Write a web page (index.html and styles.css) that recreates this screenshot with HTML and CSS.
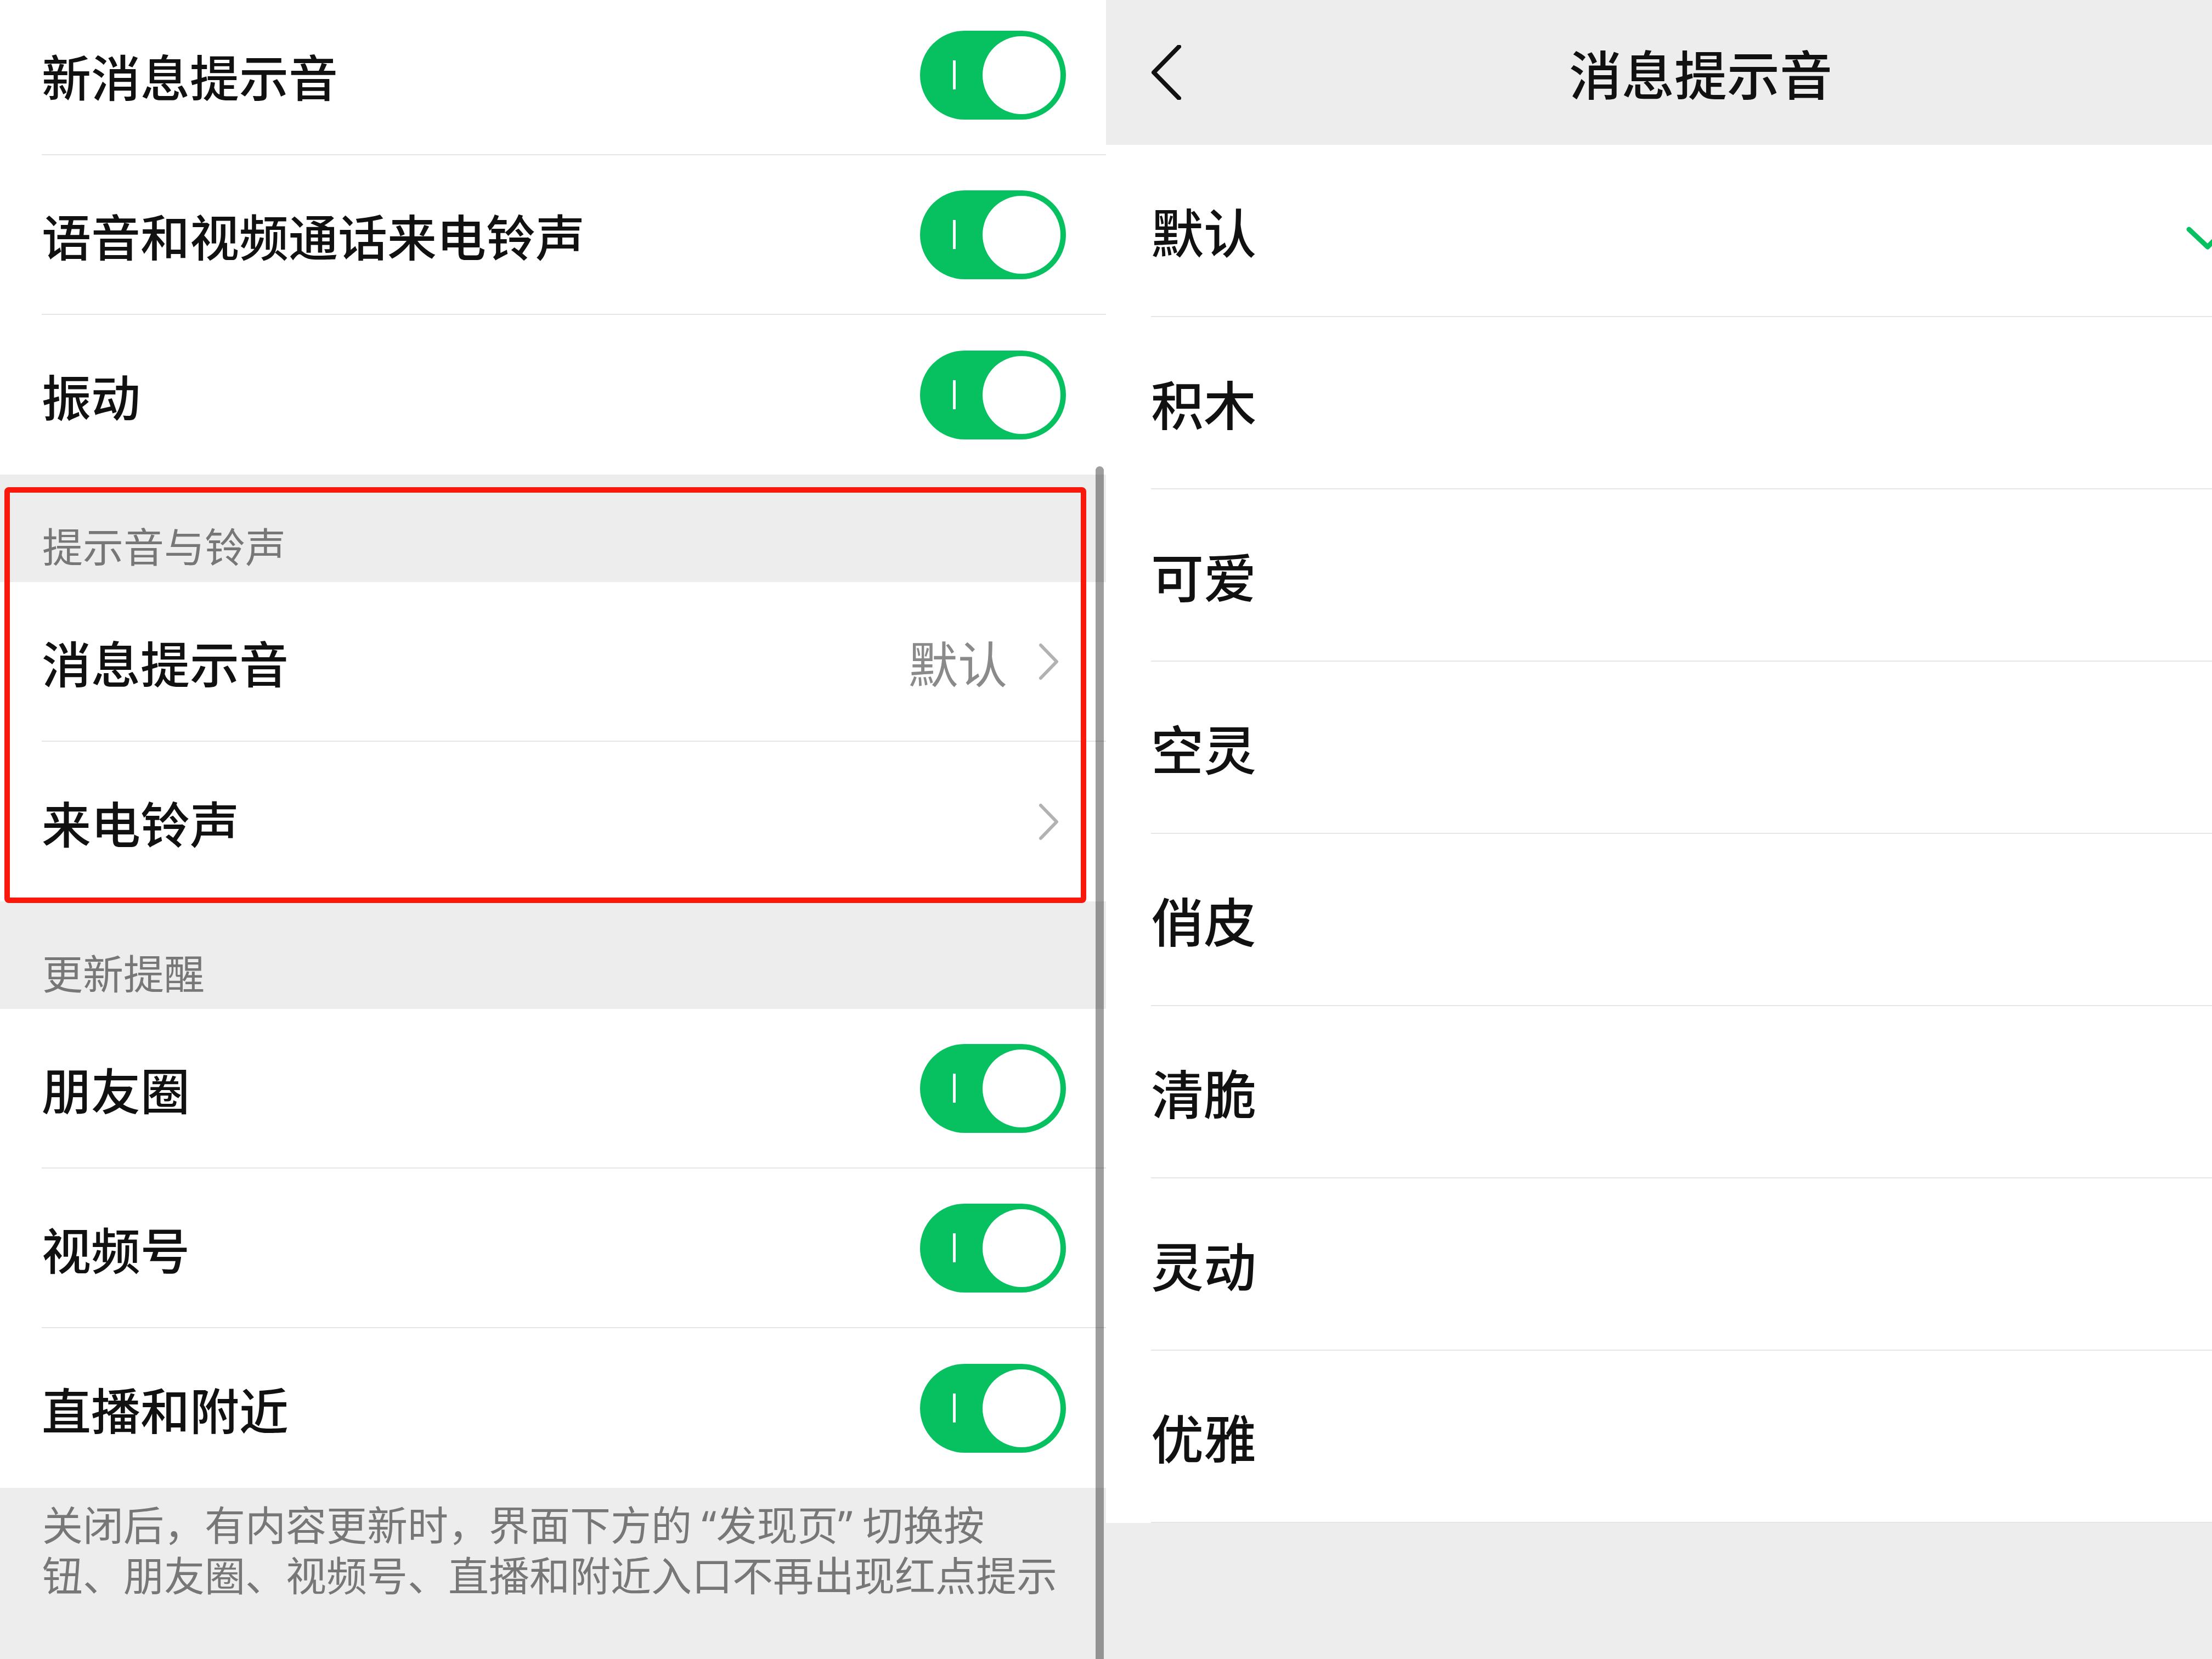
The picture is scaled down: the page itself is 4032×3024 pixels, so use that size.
FILE: index.html
```html
<html lang="zh-CN">

<head>
    <meta charset="UTF-8">
    <meta name="viewport" content="width=device-width, initial-scale=1.0">
    <title>消息提示音</title>

    <link rel="stylesheet" href="styles.css">
</head>

<body>
    <div class="screens">
        <section class="screen settings">
            <div class="group first">
                <div class="cell">
                    <div class="cell-body">
                        <span class="label">新消息提示音</span>
                        <span class="switch"><i></i><b></b></span>
                    </div>
                </div>
                <div class="cell">
                    <div class="cell-body">
                        <span class="label">语音和视频通话来电铃声</span>
                        <span class="switch"><i></i><b></b></span>
                    </div>
                </div>
                <div class="cell">
                    <div class="cell-body">
                        <span class="label">振动</span>
                        <span class="switch"><i></i><b></b></span>
                    </div>
                </div>
            </div>

            <div class="group-title">提示音与铃声</div>
            <div class="group">
                <div class="cell">
                    <div class="cell-body">
                        <span class="label">消息提示音</span>
                        <span class="value">默认</span>
                        <svg class="arrow" viewBox="0 0 40 68">
                            <polyline points="5,4 34,34 5,64" />
                        </svg>
                    </div>
                </div>
                <div class="cell">
                    <div class="cell-body">
                        <span class="label">来电铃声</span>
                        <svg class="arrow" viewBox="0 0 40 68">
                            <polyline points="5,4 34,34 5,64" />
                        </svg>
                    </div>
                </div>
            </div>

            <div class="group-title">更新提醒</div>
            <div class="group">
                <div class="cell">
                    <div class="cell-body">
                        <span class="label">朋友圈</span>
                        <span class="switch"><i></i><b></b></span>
                    </div>
                </div>
                <div class="cell">
                    <div class="cell-body">
                        <span class="label">视频号</span>
                        <span class="switch"><i></i><b></b></span>
                    </div>
                </div>
                <div class="cell">
                    <div class="cell-body">
                        <span class="label">直播和附近</span>
                        <span class="switch"><i></i><b></b></span>
                    </div>
                </div>
            </div>
            <div class="group-tip">
                <p>关闭后，有内容更新时，界面下方的<span class="quote open">“</span>发现页<span class="quote close">”</span>切换按</p>
                <p>钮、朋友圈、视频号、直播和附近入口不再出现红点提示</p>
            </div>

            <!-- annotation box drawn over the screenshot -->
            <div class="highlight"></div>
            <div class="scrollbar"></div>
        </section>

        <section class="screen tones">
            <div class="phone">
                <header class="navbar">
                    <svg class="back" viewBox="0 0 56 100">
                        <polyline points="52,3 6,50 52,97" />
                    </svg>
                    <div class="navbar-title">消息提示音</div>
                    <div></div>
                </header>
                <div class="tone-list">
                    <div class="tone">
                        <div class="tone-body">
                            <span>默认</span>
                            <svg class="check" viewBox="0 0 110 80">
                                <polyline points="6,38 40,70 104,6" />
                            </svg>
                        </div>
                    </div>
                    <div class="tone"><div class="tone-body"><span>积木</span></div></div>
                    <div class="tone"><div class="tone-body"><span>可爱</span></div></div>
                    <div class="tone"><div class="tone-body"><span>空灵</span></div></div>
                    <div class="tone"><div class="tone-body"><span>俏皮</span></div></div>
                    <div class="tone"><div class="tone-body"><span>清脆</span></div></div>
                    <div class="tone"><div class="tone-body"><span>灵动</span></div></div>
                    <div class="tone"><div class="tone-body"><span>优雅</span></div></div>
                </div>
            </div>
        </section>
    </div>
</body>

</html>
```

FILE: styles.css
```css
* {
    box-sizing: border-box;
    margin: 0;
    padding: 0;
}

html,
body {
    width: 4032px;
    height: 3024px;
    overflow: hidden;
}

body {
    font-family: "Noto Sans CJK SC", "Noto Sans", sans-serif;
    color: #111111;
    background: #ededed;
}

.screens {
    display: flex;
    height: 100%;
}

.screen {
    width: 2016px;
    height: 100%;
    overflow: hidden;
}

/* left screen: settings list */

.settings {
    position: relative;
    display: flex;
    flex-direction: column;
    background: #ededed;
}

.group {
    background: #ffffff;
}

.group.first {
    margin-top: -8px;
}

.cell {
    height: 291px;
    padding-left: 76px;
}

.cell-body {
    height: 100%;
    display: flex;
    align-items: center;
    padding-right: 73px;
    border-bottom: 2px solid #e5e5e5;
}

.cell:last-child .cell-body {
    border-bottom: 0;
}

.label {
    flex: 1;
    font-size: 90px;
    font-weight: 500;
    line-height: 1;
}

.value {
    font-size: 90px;
    line-height: 1;
    color: #8a8a8a;
    margin-right: 56px;
}

.arrow {
    width: 40px;
    height: 68px;
    margin-right: 11px;
}

.arrow polyline {
    fill: none;
    stroke: #b2b2b2;
    stroke-width: 6;
    stroke-linecap: round;
    stroke-linejoin: round;
}

.switch {
    width: 266px;
    height: 162px;
    border-radius: 81px;
    background: #07c160;
    display: flex;
    align-items: center;
    padding: 0 10px 0 60px;
}

.switch i {
    width: 5px;
    height: 53px;
    background: #ffffff;
}

.switch b {
    width: 142px;
    height: 142px;
    margin-left: auto;
    border-radius: 50%;
    background: #ffffff;
}

.group-title {
    height: 196px;
    padding: 91px 0 0 77px;
    font-size: 74px;
    line-height: 74px;
    color: #777777;
}

.group-tip {
    flex: 1;
    padding: 18px 0 0 77px;
    font-size: 74px;
    line-height: 92px;
    color: #777777;
}

.group-tip p {
    height: 92px;
    white-space: nowrap;
}

.quote {
    display: inline-block;
    line-height: 74px;
    font-family: "Noto Sans", sans-serif;
}

.quote.open {
    padding-left: 18px;
}

.quote.close {
    padding-right: 18px;
}

.highlight {
    position: absolute;
    left: 8px;
    top: 888px;
    width: 1972px;
    height: 758px;
    border: 10px solid #f8190c;
    border-radius: 8px;
}

.scrollbar {
    position: absolute;
    left: 1997px;
    top: 850px;
    bottom: 0;
    width: 15px;
    border-radius: 8px 8px 0 0;
    background: rgba(0, 0, 0, 0.38);
}

/* right screen: tone picker, cropped on the right */

.phone {
    width: 2168px;
    height: 100%;
    background: #ededed;
}

.navbar {
    height: 264px;
    display: grid;
    grid-template-columns: 1fr auto 1fr;
    align-items: center;
}

.back {
    width: 56px;
    height: 100px;
    margin-left: 81px;
}

.back polyline {
    fill: none;
    stroke: #111111;
    stroke-width: 8;
    stroke-linecap: round;
    stroke-linejoin: round;
}

.navbar-title {
    font-size: 96px;
    font-weight: 500;
    line-height: 1;
}

.tone-list {
    background: #ffffff;
}

.tone {
    height: 314px;
    padding-left: 82px;
}

.tone-body {
    height: 100%;
    display: flex;
    align-items: center;
    padding-right: 90px;
    border-bottom: 2px solid #e5e5e5;
    font-size: 96px;
    font-weight: 500;
    line-height: 1;
}

.check {
    width: 110px;
    height: 80px;
    margin-left: auto;
}

.check polyline {
    fill: none;
    stroke: #07c160;
    stroke-width: 9;
    stroke-linecap: round;
    stroke-linejoin: round;
}
```
